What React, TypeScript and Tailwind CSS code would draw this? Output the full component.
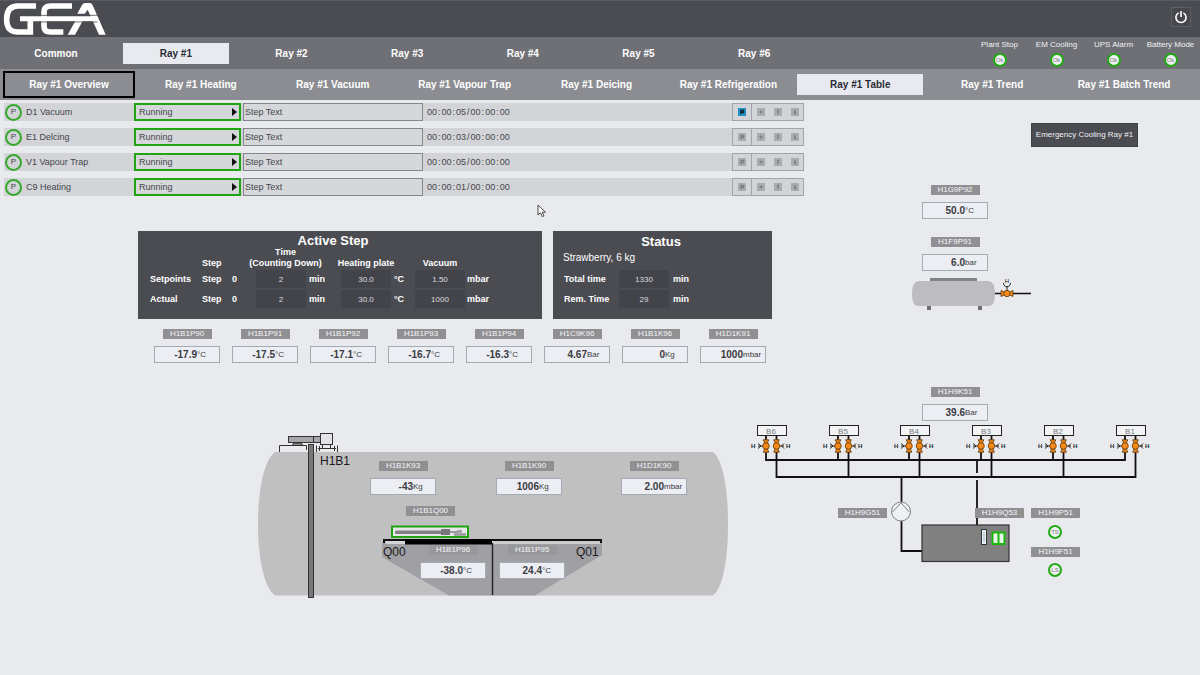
import type { ReactNode } from 'react';

const mainTabs = ['Ray #1', 'Ray #2', 'Ray #3', 'Ray #4', 'Ray #5', 'Ray #6'];

const subTabs = [
  'Ray #1 Overview',
  'Ray #1 Heating',
  'Ray #1 Vacuum',
  'Ray #1 Vapour Trap',
  'Ray #1 Deicing',
  'Ray #1 Refrigeration',
  'Ray #1 Table',
  'Ray #1 Trend',
  'Ray #1 Batch Trend',
];

const indicators = ['Plant Stop', 'EM Cooling', 'UPS Alarm', 'Battery Mode'];

const phases = [
  { name: 'D1 Vacuum', elapsed: ['00', '00', '05'], active: true },
  { name: 'E1 Delcing', elapsed: ['00', '00', '03'], active: false },
  { name: 'V1 Vapour Trap', elapsed: ['00', '00', '05'], active: false },
  { name: 'C9 Heating', elapsed: ['00', '00', '01'], active: false },
];

const chamberSensors = [
  { tag: 'H1B1P90', value: '-17.9', unit: '°C' },
  { tag: 'H1B1P91', value: '-17.5', unit: '°C' },
  { tag: 'H1B1P92', value: '-17.1', unit: '°C' },
  { tag: 'H1B1P93', value: '-16.7', unit: '°C' },
  { tag: 'H1B1P94', value: '-16.3', unit: '°C' },
  { tag: 'H1C9K96', value: '4.67', unit: 'Bar' },
  { tag: 'H1B1K96', value: '0', unit: 'Kg' },
  { tag: 'H1D1K91', value: '1000', unit: 'mbar' },
];

const branches = [
  { name: 'B6', x: 757 },
  { name: 'B5', x: 829 },
  { name: 'B4', x: 900 },
  { name: 'B3', x: 972 },
  { name: 'B2', x: 1044 },
  { name: 'B1', x: 1116 },
];

function Logo() {
  return (
    <svg className="h-[37px] w-[110px]" viewBox="0 0 330 111" role="img" aria-label="GEA">
      <g fill="none" stroke="#fff" strokeWidth="17">
        <path d="M108 15H54C30 15 20 30 20 54C20 80 30 93 54 93H91V54" />
        <path d="M216 15H152C138 15 132 21 132 33V75C132 88 138 93 152 93H190" />
        <path d="M60 53H286" strokeWidth="15" />
      </g>
      <path fill="#fff" d="M203 101L226 60H248L225 101ZM232 38L246 12Q249 6 256 6H269Q275 6 278 13L317 101H297L263 26L254 38Z" />
      <path fill="none" stroke="#4b4c51" strokeWidth="3" d="M112 43H292M116 63H292" opacity=".8" />
    </svg>
  );
}

function Tag({ children, blend = false }: { children: ReactNode; blend?: boolean }) {
  return (
    <span
      className={
        blend
          ? 'flex h-[10px] w-[49px] items-center justify-center bg-[#98979b] text-[8px] leading-[10px] text-[#f6f6f8]'
          : 'flex h-[10px] w-[49px] items-center justify-center bg-[#909093] text-[8px] leading-[10px] text-[#f6f6f8]'
      }
    >
      {children}
    </span>
  );
}

type SensorProps = { tag: string; value: string; unit: string; blend?: boolean };

function Sensor({ tag, value, unit, blend }: SensorProps) {
  return (
    <div className="flex w-[66px] flex-col items-center gap-[7px]">
      <Tag blend={blend}>{tag}</Tag>
      <div className="flex h-[17px] w-full items-center border border-[#a3abb2] bg-[#eceef3] leading-[15px] text-[#3a3b42]">
        <span className="w-[42px] text-right text-[10px] font-bold">{value}</span>
        <span className="text-[8px]">{unit}</span>
      </div>
    </div>
  );
}

function Ring({ children }: { children: ReactNode }) {
  return (
    <span className="flex size-[14px] items-center justify-center rounded-full border-2 border-[#22a914] bg-[#eef0f3] text-[6px] leading-none text-[#77787c]">
      {children}
    </span>
  );
}

function Header() {
  return (
    <header>
      <div className="flex h-[37px] items-center justify-between border-t border-[#5a5b61] bg-[#4b4c51] pr-[9px]">
        <Logo />
        <button
          type="button"
          aria-label="Power"
          className="mt-[6px] flex size-5 items-center justify-center self-start border border-[#5f6066] bg-[#47484d]"
        >
          <svg className="size-4" viewBox="0 0 16 16" fill="none" stroke="#fff" strokeWidth="1.6">
            <path d="M5.6 3.9a5.1 5.1 0 1 0 4.800 0M8 2v6" />
          </svg>
        </button>
      </div>
      <nav className="flex h-8 items-center bg-[#6f7075] pr-px pl-1 text-[10px] font-bold text-white">
        <a href="#common" className="flex h-[21px] w-[104px] items-center justify-center">
          Common
        </a>
        <div className="ml-[10px] grid w-[694px] grid-cols-6">
          {mainTabs.map((tab, i) => (
            <a
              key={tab}
              href={'#' + tab}
              className={
                i === 0
                  ? 'mx-[5px] flex h-[21px] items-center justify-center bg-[#e8eaf0] text-[#2b2c33]'
                  : 'mx-[5px] flex h-[21px] items-center justify-center'
              }
            >
              {tab}
            </a>
          ))}
        </div>
        <div className="ml-auto grid grid-cols-[57px_57px_57px_57px] text-[8px] font-normal text-[#f0f0f4]">
          {indicators.map((name) => (
            <div key={name} className="flex flex-col items-center gap-[3px] leading-[10px] whitespace-nowrap">
              {name}
              <Ring>Ok</Ring>
            </div>
          ))}
        </div>
      </nav>
      <nav className="grid h-[31px] grid-cols-9 items-center bg-[#8c8d92] pr-[10px] pl-[3px] text-[10px] font-bold whitespace-nowrap text-white">
        {subTabs.map((tab, i) => (
          <a
            key={tab}
            href={'#' + tab}
            className={
              i === 0
                ? 'flex h-[27px] items-center justify-center border-2 border-black'
                : i === 6
                  ? 'mx-[3px] flex h-[21px] items-center justify-center bg-[#e8eaf0] text-[#2b2c33]'
                  : 'mx-[3px] flex h-[21px] items-center justify-center'
            }
          >
            {tab}
          </a>
        ))}
      </nav>
    </header>
  );
}

function Clock({ parts }: { parts: string[] }) {
  return (
    <>
      <span>{parts[0]}</span>
      <span>:</span>
      <span>{parts[1]}</span>
      <span>:</span>
      <span>{parts[2]}</span>
    </>
  );
}

const glyphs = [
  { label: 'Mode', path: 'M3 6V2.5H5.5V4.5H3' },
  { label: 'Hold', path: 'M2.5 4H5.5M4 2.5V5.5' },
  { label: 'Interlock', path: 'M4 2V6M3 2.5H5' },
  { label: 'Info', path: 'M4 2V5.5M3 5.5H5.5' },
];

function GlyphButton({ index, active }: { index: number; active: boolean }) {
  return (
    <button type="button" aria-label={glyphs[index].label} className="size-2">
      <svg className="size-2" viewBox="0 0 8 8">
        <rect width="8" height="8" fill={active ? '#2090c4' : '#a9abaf'} />
        <path d={glyphs[index].path} fill="none" stroke={active ? '#12242e' : '#7d7f84'} strokeWidth="1.4" />
      </svg>
    </button>
  );
}

function PhaseRow({ name, elapsed, active }: { name: string; elapsed: string[]; active: boolean }) {
  return (
    <li className="flex h-[18px] items-center bg-[#d3d4d8] text-[9px] leading-[14px] text-[#45464c]">
      <div className="flex w-[130px] items-center gap-1 pl-px">
        <span className="flex size-[17px] items-center justify-center rounded-full border-2 border-[#35a82c] text-[8px]">
          P
        </span>
        {name}
      </div>
      <div className="relative flex h-[18px] w-[107px]">
        <select
          aria-label={name + ' state'}
          defaultValue="Running"
          className="w-full appearance-none border-2 border-[#1fa512] bg-[#d6d7db] px-[3px] leading-[14px]"
        >
          <option>Running</option>
        </select>
        <svg className="pointer-events-none absolute top-[5px] right-1 h-2 w-[5px]" viewBox="0 0 5 8">
          <path d="M0 0L5 4L0 8Z" fill="#111" />
        </svg>
      </div>
      <input
        readOnly
        aria-label={name + ' step'}
        value="Step Text"
        className="ml-[2px] h-[18px] w-[180px] border border-[#85868b] bg-[#d6d7db] px-px leading-4"
      />
      <div className="flex flex-1 gap-px pl-1">
        <Clock parts={elapsed} />
        <span>/</span>
        <Clock parts={['00', '00', '00']} />
      </div>
      <div className="flex h-[18px] w-5 items-center justify-center border border-[#a3a4a8]">
        <GlyphButton index={0} active={active} />
      </div>
      <div className="-ml-px flex h-[18px] w-[53px] items-center justify-center gap-[9px] border border-[#a3a4a8]">
        <GlyphButton index={1} active={false} />
        <GlyphButton index={2} active={false} />
        <GlyphButton index={3} active={false} />
      </div>
    </li>
  );
}

function Field({ children }: { children: ReactNode }) {
  return (
    <span className="flex h-[18px] w-[50px] items-center justify-center bg-[#434449] pt-px text-[8px] leading-[14px] font-normal text-[#dcdce0]">
      {children}
    </span>
  );
}

function StepRow({ label, time, temp, vacuum }: { label: string; time: string; temp: string; vacuum: string }) {
  return (
    <tr className="h-5 leading-[14px]">
      <th scope="row" className="p-0 text-left">{label}</th>
      <td className="p-0">Step</td>
      <td className="p-0">0</td>
      <td className="p-0"><Field>{time}</Field></td>
      <td className="p-0 pl-[3px]">min</td>
      <td className="p-0"><Field>{temp}</Field></td>
      <td className="p-0 pl-[3px]">°C</td>
      <td className="p-0"><Field>{vacuum}</Field></td>
      <td className="p-0 pl-[2px]">mbar</td>
    </tr>
  );
}

function ActiveStep() {
  return (
    <section className="h-[88px] w-[404px] bg-[#4b4c51] pt-1 pl-3 text-[9px] font-bold text-white">
      <h2 className="pr-[26px] text-center text-[13px] leading-[11px]">Active Step</h2>
      <table className="w-full table-fixed border-collapse">
        <colgroup>
          <col className="w-[52px]" />
          <col className="w-[30px]" />
          <col className="w-[24px]" />
          <col className="w-[50px]" />
          <col className="w-[35px]" />
          <col className="w-[50px]" />
          <col className="w-[24px]" />
          <col className="w-[50px]" />
          <col />
        </colgroup>
        <thead>
          <tr className="h-[23px] align-bottom leading-[11px] whitespace-nowrap">
            <td className="p-0" />
            <th className="p-0 text-left">Step</th>
            <th colSpan={3} className="p-0 pr-[2px]">Time<br />(Counting Down)</th>
            <th className="p-0"><div className="flex justify-center">Heating plate</div></th>
            <td className="p-0" />
            <th className="p-0">Vacuum</th>
            <td className="p-0" />
          </tr>
        </thead>
        <tbody>
          <StepRow label="Setpoints" time="2" temp="30.0" vacuum="1.50" />
          <StepRow label="Actual" time="2" temp="30.0" vacuum="1000" />
        </tbody>
      </table>
    </section>
  );
}

function Status() {
  return (
    <section className="h-[88px] w-[219px] bg-[#4b4c51] pt-1 pl-[10px] text-[9px] font-bold text-white">
      <h2 className="pr-[13px] text-center text-[13px] leading-[14px]">Status</h2>
      <p className="pt-[2px] pb-1 text-[10px] leading-[14px] font-normal">Strawberry, 6 kg</p>
      {[
        ['Total time', '1330'],
        ['Rem. Time', '29'],
      ].map(([label, value]) => (
        <div key={label} className="flex h-5 items-center leading-[14px]">
          <span className="w-[56px] pl-px">{label}</span>
          <Field>{value}</Field>
          <span className="pl-1">min</span>
        </div>
      ))}
    </section>
  );
}

function Compressor() {
  return (
    <svg className="h-[33px] w-[125px]" viewBox="910 277 125 33" aria-label="Compressor">
      <rect x="930" y="278" width="47" height="4" fill="#7f8287" />
      <path d="M918 281H989Q995 282 995 294Q995 306 989 306H918Q912 306 912 294Q912 282 918 281Z" fill="#bdbdbf" />
      <rect x="927" y="306" width="4" height="4" fill="#6f7175" />
      <rect x="978" y="306" width="4" height="4" fill="#6f7175" />
      <path d="M995 293.500H1031" stroke="#111" strokeWidth="1.6" />
      <path d="M1007 291V286.500M1003.500 283C1003.500 288 1010.500 288 1010.500 283" fill="none" stroke="#222" strokeWidth="1" />
      <text x="1007" y="283" fontSize="6" textAnchor="middle" fill="#222">H</text>
      <path d="M1001 290.500L1007 293.500L1001 296.500ZM1013 290.500L1007 293.500L1013 296.500Z" fill="#f28a1c" stroke="#5a3208" strokeWidth=".8" />
      <circle cx="1007" cy="293.500" r="3.200" fill="#f28a1c" stroke="#5a3208" strokeWidth=".8" />
    </svg>
  );
}

function Valve({ x, y }: { x: number; y: number }) {
  return (
    <g fill="#f58c1a" stroke="#5a3208" strokeWidth=".8">
      <path d={`M${x - 2.800} ${y - 6.200}H${x + 2.800}L${x} ${y}L${x + 2.800} ${y + 6.200}H${x - 2.800}L${x} ${y}Z`} />
      <circle cx={x} cy={y} r="3.300" />
    </g>
  );
}

function TankDiagram() {
  return (
    <div className="relative h-[230px] w-[490px]">
      <svg className="block h-[230px] w-[490px]" viewBox="250 380 490 230" aria-label="Freeze dryer chamber">
        <path d="M275 452H713C723 460 728 490 728 524C728 558 723 588 713 595.500H275C264 588 258 558 258 524C258 490 264 460 275 452Z" fill="#c0c0c0" />
        <g fill="none" stroke="#333" strokeWidth="1">
          <path d="M279.500 452V445.500H306.500V450M316.500 452V445.500M337.500 452V445.500M318 448.500H336M319.500 446V451M334.500 446V451" />
          <rect x="288.500" y="436.500" width="32" height="6" fill="#a5a6a8" />
          <path d="M313.500 436.500V442.500" />
          <path d="M294 443H301L303 445.500H292Z" fill="#888" />
          <rect x="320.500" y="433.500" width="12" height="11" fill="#e2e3e6" />
          <path d="M322.500 445V448M330.500 445V448" />
          <rect x="308.500" y="444.500" width="5" height="153" fill="#77777a" />
        </g>
        <path d="M382 543H602V555L535 595.500H449L382 557Z" fill="#a09fa4" />
        <rect x="386" y="541" width="20" height="3" fill="#d4d5d8" />
        <rect x="492" y="541.500" width="108" height="2.500" fill="#cfcfd2" />
        <path d="M384 543V540H601V543" fill="none" stroke="#111" strokeWidth="2" />
        <rect x="405" y="539" width="87" height="5.500" fill="#000" />
        <path d="M492.500 543V595" stroke="#222" strokeWidth="1.400" />
        <rect x="392" y="526.500" width="76" height="10.500" fill="#e6e7e9" stroke="#1fa512" strokeWidth="2" />
        <rect x="395" y="530.500" width="47" height="3.500" rx="1.500" fill="#808083" />
        <rect x="441" y="529" width="9" height="6" fill="#77777a" />
        <path d="M450 532H457" stroke="#808083" strokeWidth="1.500" />
        <path d="M454 534.500H466M457 531.500H462" stroke="#98989b" strokeWidth="2.500" />
        <g fill="#1a1a1c" fontSize="12">
          <text x="320" y="465">H1B1</text>
          <text x="383" y="556">Q00</text>
          <text x="576" y="556">Q01</text>
        </g>
      </svg>
      <div className="absolute top-[81px] left-[120px]"><Sensor tag="H1B1K93" value="-43" unit="Kg" /></div>
      <div className="absolute top-[81px] left-[246px]"><Sensor tag="H1B1K90" value="1006" unit="Kg" /></div>
      <div className="absolute top-[81px] left-[371px]"><Sensor tag="H1D1K90" value="2.00" unit="mbar" /></div>
      <div className="absolute top-[126px] left-[156px]"><Tag>H1B1Q00</Tag></div>
      <div className="absolute top-[165px] left-[170px]"><Sensor tag="H1B1P96" value="-38.0" unit="°C" blend /></div>
      <div className="absolute top-[165px] left-[249px]"><Sensor tag="H1B1P95" value="24.4" unit="°C" blend /></div>
    </div>
  );
}

function RefrigerationDiagram() {
  return (
    <div className="relative h-[230px] w-[410px]">
      <svg className="block h-[230px] w-[410px]" viewBox="745 380 410 230" aria-label="Refrigeration circuit">
        <g fill="none" stroke="#111" strokeWidth="1.800">
          <path d="M766 460H1125M776 477H1136" />
          <path d="M901.500 477V502M901.500 521V551H922M977 460V473M977 480V525" />
          {branches.map(({ name, x }) => (
            <path key={name} d={`M${x + 9} 435V460.900M${x + 19.500} 435V477.900`} />
          ))}
        </g>
        {branches.map(({ name, x }) => (
          <g key={name}>
            <rect x={x + 0.500} y="425.500" width="29" height="10" fill="#f3f4f6" stroke="#222" />
            <text x={x + 14} y="433.500" fontSize="8" textAnchor="middle" fill="#77787c">{name}</text>
            <path
              d={`M${x + 1} 443.500L${x + 4} 446L${x + 1} 448.500M${x + 1} 446H${x + 6}M${x + 27} 443.500L${x + 24.500} 446L${x + 27} 448.500M${x + 23} 446H${x + 27}`}
              fill="none"
              stroke="#222"
              strokeWidth="1"
            />
            <text x={x - 6} y="448" fontSize="6" fontWeight="bold" fill="#222">H</text>
            <text x={x + 29} y="448" fontSize="6" fontWeight="bold" fill="#222">H</text>
            <Valve x={x + 9} y={446} />
            <Valve x={x + 19.500} y={446} />
          </g>
        ))}
        <circle cx="901" cy="511.500" r="9.500" fill="#eef0f3" stroke="#7d7f83" />
        <path d="M892.500 512L901 503L909.500 512" fill="none" stroke="#7d7f83" />
        <rect x="922" y="525" width="87" height="36.500" fill="#808080" stroke="#333" strokeWidth="1.200" />
        <rect x="981.500" y="529.500" width="5" height="15" fill="#f0f3f5" stroke="#333" />
        <path d="M984 531.500V542" stroke="#8fb4c4" strokeWidth="1" />
        <rect x="991.500" y="531.500" width="14" height="13.500" fill="#18b50a" />
        <path d="M993.500 533.500H997.500V543H993.500ZM999.500 533.500H1003.500V543H999.500Z" fill="#e8f5e8" />
      </svg>
      <div className="absolute top-[7px] left-[177px]"><Sensor tag="H1H9K51" value="39.6" unit="Bar" /></div>
      <div className="absolute top-[128px] left-[93px]"><Tag>H1H9G51</Tag></div>
      <div className="absolute top-[128px] left-[230px]"><Tag>H1H9Q53</Tag></div>
      <div className="absolute top-[128px] left-[286px]"><Tag>H1H9P51</Tag></div>
      <div className="absolute top-[145px] left-[303px]"><Ring>TS</Ring></div>
      <div className="absolute top-[167px] left-[286px]"><Tag>H1H9F51</Tag></div>
      <div className="absolute top-[183px] left-[303px]"><Ring>LS</Ring></div>
    </div>
  );
}

export default function App() {
  return (
    <div className="min-h-screen overflow-x-hidden bg-[#e8eaee] font-['Liberation_Sans',Arial,sans-serif]">
      <Header />
      <main>
        <div className="grid grid-cols-[67%_1fr]">
          <div className="relative pt-[3px]">
            <ul className="flex flex-col gap-[7px] pl-1">
              {phases.map((phase) => (
                <PhaseRow key={phase.name} {...phase} />
              ))}
            </ul>
            <div className="mt-[35px] flex gap-[11px] pl-[138px]">
              <ActiveStep />
              <Status />
            </div>
            <div className="mt-[10px] flex gap-3 pl-[154px]">
              {chamberSensors.map((sensor) => (
                <Sensor key={sensor.tag} {...sensor} />
              ))}
            </div>
            <svg className="absolute top-[104px] left-[537px] h-[14px] w-[10px]" viewBox="0 0 10 14" aria-hidden="true">
              <path d="M1 1V11L3.500 8.800L5.300 12.600L7 11.800L5.300 8.200H8.500Z" fill="#fff" stroke="#333" strokeWidth=".9" />
            </svg>
          </div>
          <div className="flex flex-col items-start">
            <button type="button" className="mt-[23px] ml-[227px] h-6 w-[107px] border border-[#3f4045] bg-[#4b4c51] text-[8px] whitespace-nowrap text-[#f0f0f4]">
              Emergency Cooling Ray #1
            </button>
            <div className="mt-[38px] ml-[118px] flex flex-col gap-[18px]">
              <Sensor tag="H1G9P92" value="50.0" unit="°C" />
              <Sensor tag="H1F9P91" value="6.0" unit="bar" />
            </div>
            <div className="mt-[6px] ml-[106px]">
              <Compressor />
            </div>
          </div>
        </div>
        <div className="mt-[17px] flex gap-[5px] pl-[250px]">
          <TankDiagram />
          <RefrigerationDiagram />
        </div>
      </main>
    </div>
  );
}
